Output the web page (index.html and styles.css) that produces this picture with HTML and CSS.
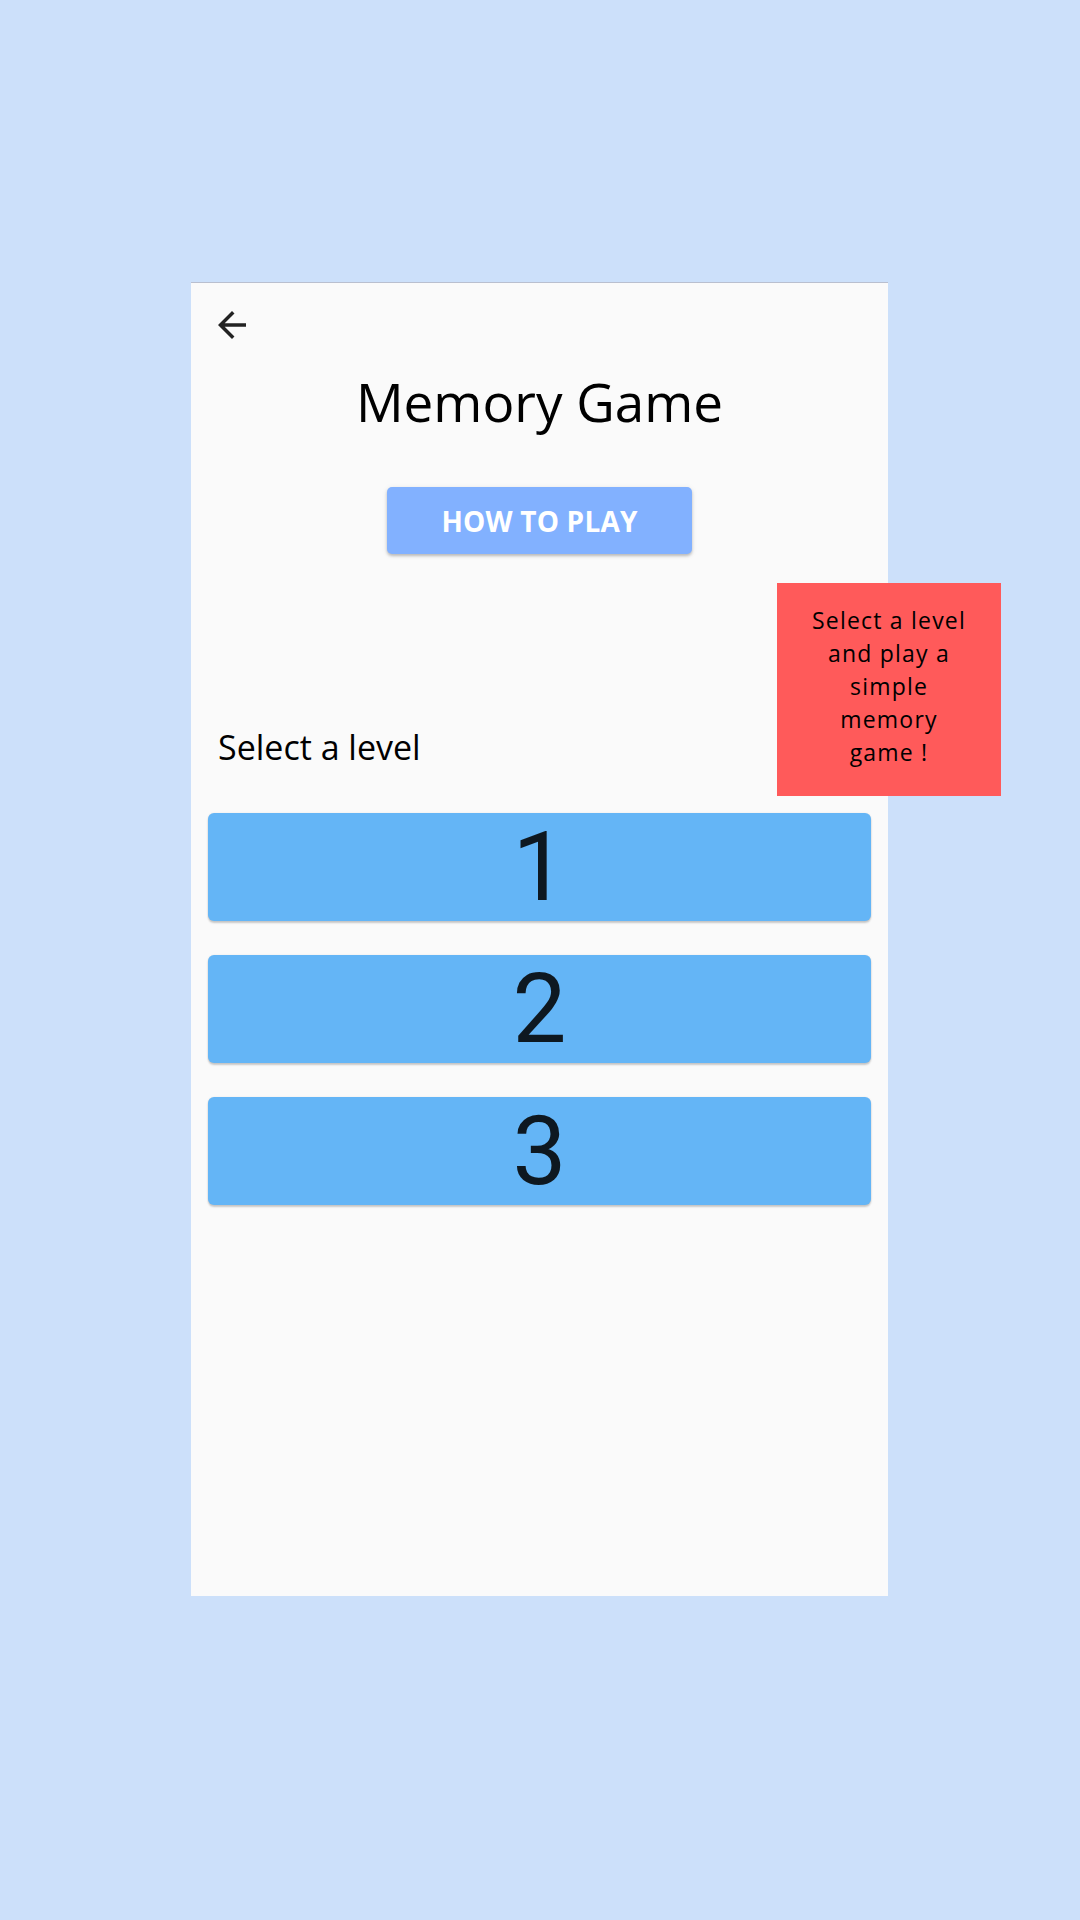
FILE: index.html
```html
<!DOCTYPE html>
<html lang="en">
<head>
<meta charset="utf-8">
<title>Memory Game</title>
<link rel="stylesheet" href="styles.css">
</head>
<body>
<div class="canvas">
  <main class="phone">
    <div class="topbar">
      <button class="back" aria-label="Back">
        <svg viewBox="0 0 24 24" width="42" height="42"><path d="M20 11H7.83l5.59-5.59L12 4l-8 8 8 8 1.41-1.41L7.83 13H20v-2z" fill="#222"/></svg>
      </button>
    </div>
    <h1 class="title">Memory Game</h1>
    <button class="howto">HOW TO PLAY</button>
    <p class="label">Select a level</p>
    <div class="levels">
      <button class="level">1</button>
      <button class="level">2</button>
      <button class="level">3</button>
    </div>
  </main>
  <div class="note">Select a level<br>and play a<br>simple<br>memory<br>game !</div>
</div>
</body>
</html>
```
FILE: styles.css
```css
html, body {
  margin: 0;
  padding: 0;
}
body {
  background: #cce0fa;
  width: 1080px;
  height: 1920px;
  font-family: "Open Sans", "Noto Sans", sans-serif;
}
.canvas {
  position: relative;
  width: 1080px;
  height: 1920px;
  padding-top: 282px;
  box-sizing: border-box;
}
.phone {
  margin-left: 191px;
  width: 697px;
  height: 1314px;
  background: #fafafa;
  border-top: 1px solid #b9bfcf;
  box-sizing: border-box;
  display: flex;
  flex-direction: column;
}
.topbar {
  padding: 21px 0 0 20px;
  height: 42px;
}
.back {
  width: 42px;
  height: 42px;
  padding: 0;
  border: 0;
  background: none;
  display: block;
}
.back svg { display: block; }
.title {
  margin: 23px 0 0;
  font-size: 53px;
  line-height: 65px;
  font-weight: 400;
  text-align: center;
  color: #000;
}
.howto {
  margin: 53px auto 0;
  width: 305px;
  height: 67px;
  border: 0;
  border-radius: 5px;
  background: #82b1ff;
  color: #fff;
  font-family: "Open Sans", sans-serif;
  font-weight: 700;
  font-size: 28px;
  letter-spacing: 0.2px;
  box-shadow: 0 2px 3px rgba(0,0,0,0.22), 0 1px 6px rgba(0,0,0,0.08);
}
.label {
  margin: 172px 0 0 27px;
  font-size: 34px;
  line-height: 42px;
  color: #000;
}
.levels {
  margin: 45px 17px 0;
  display: flex;
  flex-direction: column;
  gap: 34px;
}
.level {
  height: 108px;
  border: 0;
  border-radius: 6px;
  background: #64b5f6;
  color: #0e1820;
  font-family: Roboto, sans-serif;
  font-size: 96px;
  line-height: 108px;
  padding: 0;
  box-shadow: 0 2px 2px rgba(0,0,0,0.2), 0 0 2px rgba(0,0,0,0.08);
}
.note {
  position: absolute;
  left: 777px;
  top: 583px;
  width: 224px;
  height: 213px;
  box-sizing: border-box;
  padding: 21px 0 0;
  background: #ff5a5a;
  color: #000;
  font-family: "Open Sans", sans-serif;
  font-size: 23px;
  letter-spacing: 1.2px;
  line-height: 33px;
  text-align: center;
}
```
